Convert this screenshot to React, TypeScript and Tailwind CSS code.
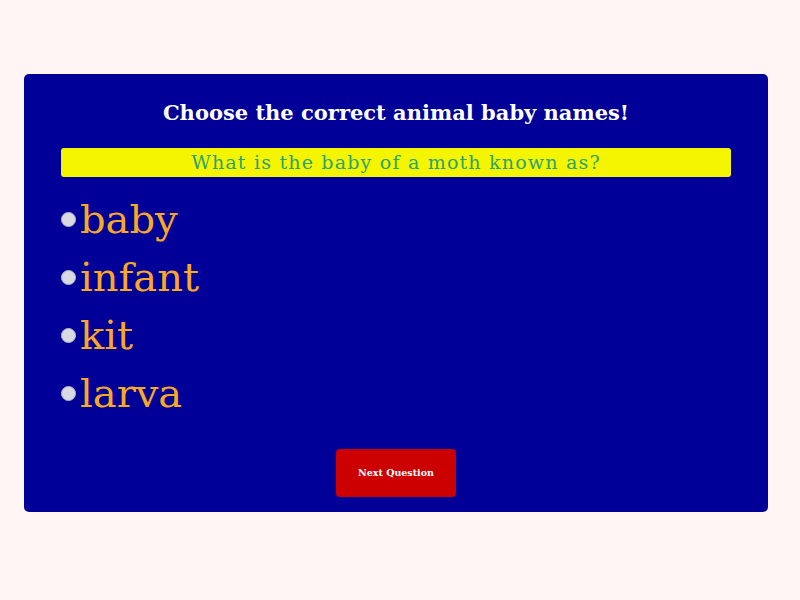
import { useState } from 'react'

const options = ['baby', 'infant', 'kit', 'larva']

export default function App() {
  const [picked, setPicked] = useState('')

  return (
    <div className="min-h-[600px] w-[800px] bg-[#fff5f5] pt-[74px]" style={{ fontFamily: '"DejaVu Serif", serif' }}>
      <div className="ml-[24px] w-[744px] h-[438px] rounded-[5px] bg-[#000099] px-[37px] pt-[24px] flex flex-col">
        <h1 className="text-center text-white font-bold text-[21px] leading-[30px]">Choose the correct animal baby names!</h1>
        <div className="mt-[20px] h-[29px] rounded-[3px] bg-[#f5f500] text-center text-[#2aa37a] text-[19px] leading-[29px] tracking-[1.2px]">
          What is the baby of a moth known as?
        </div>
        <div className="mt-[17px] flex flex-col gap-[8px]">
          {options.map(o => (
            <label key={o} className="flex items-center h-[50px] cursor-pointer">
              <input
                type="radio"
                name="answer"
                checked={picked === o}
                onChange={() => setPicked(o)}
                className="appearance-none w-[15px] h-[15px] m-0 mr-[4px] rounded-full bg-[#d9d9e2] border border-[#b8b8c4] checked:bg-[#8a8aff]"
              />
              <span className="text-[#f9a825] text-[40px] leading-[50px]">{o}</span>
            </label>
          ))}
        </div>
        <div className="flex justify-center mt-[31px]">
          <button className="w-[120px] h-[48px] rounded-[4px] bg-[#cc0000] text-white font-bold text-[9.5px]">Next Question</button>
        </div>
      </div>
    </div>
  )
}
